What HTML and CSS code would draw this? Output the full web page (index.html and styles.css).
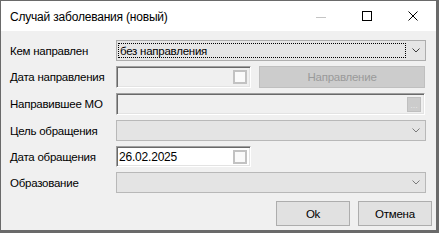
FILE: index.html
```html
<!DOCTYPE html>
<html lang="ru">
<head>
<meta charset="utf-8">
<title>Случай заболевания (новый)</title>
<link rel="stylesheet" href="styles.css">
</head>
<body>
<div class="window">
  <div class="titlebar">
    <span class="title">Случай заболевания (новый)</span>
    <div class="controls">
      <span class="ctl ctl-min"><svg width="10" height="1" viewBox="0 0 10 1"><rect width="10" height="1" fill="#c4c4c4"/></svg></span>
      <span class="ctl"><svg width="10" height="10" viewBox="0 0 10 10"><rect x="0.5" y="0.5" width="9" height="9" fill="none" stroke="#000" stroke-width="1"/></svg></span>
      <span class="ctl"><svg width="10" height="10" viewBox="0 0 10 10"><path d="M0.5 0.5 L9.5 9.5 M9.5 0.5 L0.5 9.5" stroke="#000" stroke-width="1" fill="none"/></svg></span>
    </div>
  </div>
  <div class="client">
    <div class="form">
      <div class="label">Кем направлен</div>
      <div class="combo combo-focus">
        <div class="focus">без направления</div>
        <span class="arrow"><svg width="8" height="5" viewBox="0 0 8 5"><path d="M0.5 0.5 L4 4 L7.5 0.5" stroke="#3c3c3c" fill="none"/></svg></span>
      </div>

      <div class="label">Дата направления</div>
      <div class="pair">
        <div class="date date-disabled"><span class="dbox"></span></div>
        <div class="btn btn-disabled">Направление</div>
      </div>

      <div class="label">Направившее МО</div>
      <div class="text text-disabled"><span class="dots">...</span></div>

      <div class="label">Цель обращения</div>
      <div class="combo combo-disabled">
        <div class="value"></div>
        <span class="arrow"><svg width="8" height="5" viewBox="0 0 8 5"><path d="M0.5 0.5 L4 4 L7.5 0.5" stroke="#7a7a7a" fill="none"/></svg></span>
      </div>

      <div class="label">Дата обращения</div>
      <div class="pair">
        <div class="date date-enabled"><span class="dval">26.02.2025</span><span class="dbox"></span></div>
      </div>

      <div class="label">Образование</div>
      <div class="combo combo-disabled">
        <div class="value"></div>
        <span class="arrow"><svg width="8" height="5" viewBox="0 0 8 5"><path d="M0.5 0.5 L4 4 L7.5 0.5" stroke="#7a7a7a" fill="none"/></svg></span>
      </div>
    </div>
    <div class="buttons">
      <div class="btn btn-normal">Ok</div>
      <div class="btn btn-normal">Отмена</div>
    </div>
  </div>
</div>
</body>
</html>
```
FILE: styles.css
```css
html, body {
  margin: 0;
  padding: 0;
  background: #ffffff;
}

.window {
  width: 439px;
  height: 233px;
  box-sizing: border-box;
  border: 1px solid #6a6a6a;
  border-right-width: 3px;
  border-bottom-width: 3px;
  display: flex;
  flex-direction: column;
  font-family: "Liberation Sans", Arial, sans-serif;
  font-size: 11.5px;
  letter-spacing: -0.25px;
  color: #000;
}

.titlebar {
  height: 30px;
  flex: 0 0 30px;
  background: #ffffff;
  display: flex;
  align-items: center;
  padding-left: 9px;
}

.title {
  font-size: 12px;
  letter-spacing: -0.2px;
  flex: 1;
  padding-top: 1px;
}

.controls {
  display: flex;
  height: 30px;
}

.ctl {
  width: 46px;
  height: 30px;
  display: flex;
  align-items: center;
  justify-content: center;
}

.ctl-min {
  padding-top: 3px;
  box-sizing: border-box;
}

.client {
  flex: 1;
  background: #f0f0f0;
  padding: 9px 0 0 9px;
  display: flex;
  flex-direction: column;
}

.form {
  display: grid;
  grid-template-columns: 106px 310px;
  grid-template-rows: 21px 22px 22px 21px 21px 21px;
  row-gap: 5px;
}

.label {
  display: flex;
  align-items: center;
  white-space: nowrap;
  color: #000;
}

.combo {
  box-sizing: border-box;
  border: 1px solid #adadad;
  background: #e5e5e5;
  display: flex;
  align-items: stretch;
}

.combo-disabled {
  border-color: #b8b8b8;
  background: #e4e4e4;
}

.focus {
  flex: 1;
  margin: 2px 0 2px 1px;
  border: 1px dotted #000;
  display: flex;
  align-items: center;
  padding-left: 1px;
}

.value {
  flex: 1;
}

.arrow {
  width: 19px;
  display: flex;
  align-items: center;
  justify-content: center;
}

.pair {
  display: flex;
  gap: 8px;
}

.date {
  box-sizing: border-box;
  width: 135px;
  border-top: 1px solid #a0a0a0;
  border-left: 1px solid #a0a0a0;
  border-right: 1px solid #ffffff;
  border-bottom: 1px solid #ffffff;
  box-shadow: inset 1px 1px 0 #696969, inset -1px -1px 0 #e3e3e3;
  display: flex;
  align-items: center;
  padding: 0 3px 0 2px;
}

.date-disabled {
  background: #f0f0f0;
}

.date-enabled {
  background: #ffffff;
}

.dval {
  flex: 1;
  font-size: 12px;
  letter-spacing: -0.2px;
  padding-top: 1px;
}

.dbox {
  margin-left: auto;
  width: 14px;
  height: 14px;
  box-sizing: border-box;
  border: 2px solid #c2c2c2;
  background: #fafafa;
}

.btn {
  box-sizing: border-box;
  display: flex;
  align-items: center;
  justify-content: center;
}

.btn-disabled {
  width: 166px;
  background: #cccccc;
  border: 1px solid #bfbfbf;
  color: #9a9a9a;
}

.text {
  box-sizing: border-box;
  width: 309px;
  border-top: 1px solid #a0a0a0;
  border-left: 1px solid #a0a0a0;
  border-right: 1px solid #ffffff;
  border-bottom: 1px solid #ffffff;
  box-shadow: inset 1px 1px 0 #696969, inset -1px -1px 0 #e3e3e3;
  display: flex;
  align-items: center;
  justify-content: flex-end;
  padding-right: 3px;
}

.text-disabled {
  background: #f0f0f0;
}

.dots {
  width: 14px;
  height: 15px;
  box-sizing: border-box;
  background: #cccccc;
  border: 1px solid #bfbfbf;
  color: #e6e6e6;
  font-size: 9px;
  letter-spacing: 0;
  line-height: 15px;
  text-align: center;
  overflow: hidden;
}

.buttons {
  display: flex;
  justify-content: flex-end;
  gap: 8px;
  margin-top: 8px;
  padding-right: 4px;
}

.btn-normal {
  width: 74px;
  height: 25px;
  background: #e1e1e1;
  border: 1px solid #adadad;
  color: #000;
}
```
